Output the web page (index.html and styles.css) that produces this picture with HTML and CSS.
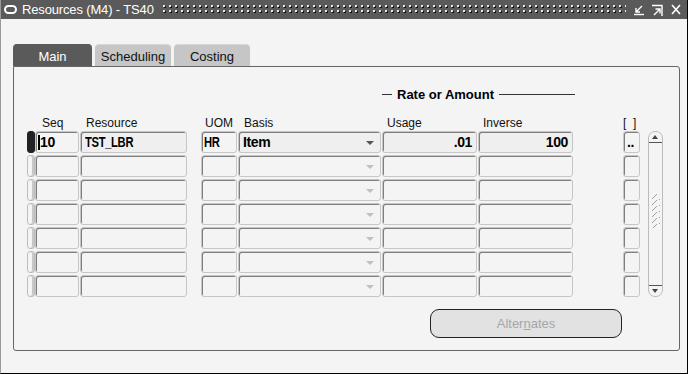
FILE: index.html
```html
<!DOCTYPE html>
<html lang="en">
<head>
  <meta charset="UTF-8" />
  <title>Resources (M4) - TS40</title>
  <link rel="stylesheet" href="styles.css">
</head>
<body>
  <div class="window">
    <div class="title-bar">
      <span class="app-icon"></span>
      <span class="title-text">Resources (M4) - TS40</span>
      <span class="grip"></span>
      <div class="win-buttons">
        <svg width="10" height="12" viewBox="0 0 10 12">
          <path d="M8 2L2 8M2 4v4h4" fill="none" stroke="#fff" stroke-width="1.4"/>
          <path d="M0 10.5h10" stroke="#fff" stroke-width="1.4"/>
        </svg>
        <svg width="11" height="12" viewBox="0 0 11 12">
          <path d="M0 1.5h10M10 1v11" stroke="#fff" stroke-width="1.4"/>
          <path d="M2 11L7.5 5.5M3.5 5h4.5v4.5" fill="none" stroke="#fff" stroke-width="1.4"/>
        </svg>
        <svg width="10" height="11" viewBox="0 0 10 11">
          <path d="M1 1l8 9M9 1l-8 9" stroke="#fff" stroke-width="1.6"/>
        </svg>
      </div>
    </div>

    <div class="content">
      <div class="tabs">
        <div class="tab active">Main</div>
        <div class="tab">Scheduling</div>
        <div class="tab">Costing</div>
      </div>

      <div class="panel">
        <div class="rate-head">
          <span class="rule short"></span>
          <span class="rate-text">Rate or Amount</span>
          <span class="rule"></span>
        </div>

        <div class="labels">
          <span class="c-ind"></span>
          <span class="c-seq">Seq</span>
          <span class="c-res">Resource</span>
          <span class="c-uom">UOM</span>
          <span class="c-basis">Basis</span>
          <span class="c-usage">Usage</span>
          <span class="c-inv">Inverse</span>
          <span class="c-more">[&nbsp;&nbsp;]</span>
        </div>

        <div class="table">
          <div class="rows">
            <div class="row current">
              <span class="ind c-ind"></span>
              <span class="field c-seq"><i class="cursor"></i><span class="val">10</span></span>
              <span class="field c-res shaded"><span class="val caps">TST_LBR</span></span>
              <span class="field c-uom"><span class="val caps">HR</span></span>
              <span class="field c-basis shaded">Item<b class="drop"></b></span>
              <span class="field c-usage shaded num">.01</span>
              <span class="field c-inv shaded num">100</span>
              <span class="field c-more">..</span>
            </div>
            <div class="row">
              <span class="ind c-ind"></span>
              <span class="field c-seq"></span>
              <span class="field c-res"></span>
              <span class="field c-uom"></span>
              <span class="field c-basis"><b class="drop"></b></span>
              <span class="field c-usage"></span>
              <span class="field c-inv"></span>
              <span class="field c-more"></span>
            </div>
            <div class="row">
              <span class="ind c-ind"></span>
              <span class="field c-seq"></span>
              <span class="field c-res"></span>
              <span class="field c-uom"></span>
              <span class="field c-basis"><b class="drop"></b></span>
              <span class="field c-usage"></span>
              <span class="field c-inv"></span>
              <span class="field c-more"></span>
            </div>
            <div class="row">
              <span class="ind c-ind"></span>
              <span class="field c-seq"></span>
              <span class="field c-res"></span>
              <span class="field c-uom"></span>
              <span class="field c-basis"><b class="drop"></b></span>
              <span class="field c-usage"></span>
              <span class="field c-inv"></span>
              <span class="field c-more"></span>
            </div>
            <div class="row">
              <span class="ind c-ind"></span>
              <span class="field c-seq"></span>
              <span class="field c-res"></span>
              <span class="field c-uom"></span>
              <span class="field c-basis"><b class="drop"></b></span>
              <span class="field c-usage"></span>
              <span class="field c-inv"></span>
              <span class="field c-more"></span>
            </div>
            <div class="row">
              <span class="ind c-ind"></span>
              <span class="field c-seq"></span>
              <span class="field c-res"></span>
              <span class="field c-uom"></span>
              <span class="field c-basis"><b class="drop"></b></span>
              <span class="field c-usage"></span>
              <span class="field c-inv"></span>
              <span class="field c-more"></span>
            </div>
            <div class="row">
              <span class="ind c-ind"></span>
              <span class="field c-seq"></span>
              <span class="field c-res"></span>
              <span class="field c-uom"></span>
              <span class="field c-basis"><b class="drop"></b></span>
              <span class="field c-usage"></span>
              <span class="field c-inv"></span>
              <span class="field c-more"></span>
            </div>
          </div>

          <div class="scrollbar">
            <span class="arrow up"></span>
            <span class="thumb-grip"></span>
            <span class="arrow down"></span>
          </div>
        </div>

        <div class="actions">
          <button class="btn" disabled>Alter<u>n</u>ates</button>
        </div>
      </div>
    </div>
  </div>
</body>
</html>
```

FILE: styles.css
```css
body {
  margin: 0;
  padding: 0;
  background: #f4f4f4;
  font-family: 'Liberation Sans', Arial, sans-serif;
  color: #000;
}

.window {
  width: 688px;
  height: 374px;
  box-sizing: border-box;
  background: #f4f4f4;
  border-left: 1px solid #9a9a9a;
  border-right: 1px solid #000;
  border-bottom: 1px solid #000;
  overflow: hidden;
}

.title-bar {
  height: 19px;
  background: #5a5a5a;
  display: flex;
  align-items: center;
  padding-left: 3px;
  color: #ffffff;
}

.app-icon {
  width: 9px;
  height: 5px;
  border: 2px solid #ffffff;
  border-radius: 5px;
  margin-right: 5px;
  flex: none;
}

.title-text {
  font-size: 13px;
  letter-spacing: -0.15px;
  white-space: nowrap;
  flex: none;
}

.grip {
  flex: 1;
  height: 10px;
  margin: 0 8px 0 9px;
  background-image:
    radial-gradient(circle at 1px 1px, #e8e8e8 0.8px, transparent 1px),
    radial-gradient(circle at 1px 1px, #111 0.8px, transparent 1px);
  background-size: 6px 5px, 6px 5px;
  background-position: 0 0, 1px 1px;
}

.win-buttons {
  display: flex;
  align-items: center;
  gap: 8px;
  padding-right: 6px;
}

.content {
  padding: 25px 0 0 12px;
}

.tabs {
  display: flex;
  gap: 3px;
  height: 22px;
}

.tab {
  width: 76px;
  background: #c6c6c6;
  border-radius: 4px 4px 0 0;
  font-size: 13px;
  text-align: center;
  line-height: 23px;
  color: #111;
  border-top: 1px solid #d8d8d8;
  box-sizing: border-box;
}

.tab.active {
  width: 79px;
  background: #5a5a5a;
  color: #ffffff;
  border-top-color: #5a5a5a;
}

.panel {
  width: 667px;
  height: 285px;
  box-sizing: border-box;
  border: 1px solid #666;
  border-radius: 0 3px 3px 3px;
  padding: 20px 0 0 13px;
}

.rate-head {
  display: flex;
  align-items: center;
  gap: 5px;
  margin-left: 355px;
  width: 193px;
  height: 15px;
}

.rule {
  flex: 1;
  height: 1px;
  background: #333;
}

.rule.short {
  flex: 0 0 10px;
}

.rate-text {
  font-size: 13px;
  font-weight: 700;
  white-space: nowrap;
}

.labels {
  display: flex;
  margin-top: 14px;
  height: 14px;
  font-size: 12px;
  line-height: 14px;
  color: #111;
}

.c-ind { width: 8px; }
.c-seq { width: 44px; }
.c-res { width: 107px; margin-left: 1px; }
.c-uom { width: 36px; margin-left: 14px; }
.c-basis { width: 143px; margin-left: 1px; }
.c-usage { width: 95px; margin-left: 1px; }
.c-inv { width: 95px; margin-left: 1px; }
.c-more { width: 17px; margin-left: 50px; }

.labels span { box-sizing: border-box; white-space: nowrap; }
.labels .c-seq { padding-left: 7px; }
.labels .c-res { padding-left: 6px; }
.labels .c-uom { padding-left: 4px; }
.labels .c-basis { padding-left: 6px; }
.labels .c-usage { padding-left: 5px; }
.labels .c-inv { padding-left: 5px; }

.table {
  display: flex;
  margin-top: 1px;
}

.rows {
  display: flex;
  flex-direction: column;
  gap: 2px;
}

.row {
  display: flex;
  height: 22px;
}

.row > span {
  box-sizing: border-box;
  height: 22px;
}

.ind {
  border: 1px solid #bdbdbd;
  border-radius: 3px;
  box-shadow: inset -2px 0 0 #c8c8c8;
  background: #f4f4f4;
}

.row.current .ind {
  background: #222;
  border-color: #222;
  box-shadow: none;
}

.field {
  position: relative;
  border: 1px solid #c6c6c6;
  border-radius: 3px;
  box-shadow: inset 1px 1px 0 #7e7e7e;
  background: #f4f4f4;
  font-size: 14px;
  font-weight: 700;
  line-height: 20px;
  padding-left: 4px;
  white-space: nowrap;
  letter-spacing: -0.4px;
}

.val {
  display: inline-block;
  transform-origin: left center;
}

.val.caps {
  transform: scaleX(0.8);
}

.field.shaded {
  background: #efefef;
}

.field.num {
  text-align: right;
  padding-right: 4px;
}

.c-uom.field { padding-left: 2px; }
.c-more.field { padding-left: 3px; }

.cursor {
  display: inline-block;
  width: 2px;
  height: 15px;
  background: #000;
  vertical-align: -3px;
  margin-right: 0;
  margin-left: -2px;
}

.drop {
  position: absolute;
  right: 6px;
  top: 9px;
  width: 0;
  height: 0;
  border-left: 4px solid transparent;
  border-right: 4px solid transparent;
  border-top: 4px solid #c0c0c0;
}

.row.current .drop {
  border-top-color: #555;
}

.scrollbar {
  margin-left: 8px;
  width: 15px;
  height: 166px;
  box-sizing: border-box;
  border: 1px solid #bcbcbc;
  border-radius: 7px;
  display: flex;
  flex-direction: column;
  align-items: center;
  justify-content: space-between;
}

.arrow {
  width: 13px;
  height: 11px;
  box-sizing: border-box;
  position: relative;
}

.arrow.up {
  border-bottom: 1px solid #555;
}

.arrow.down {
  border-top: 1px solid #555;
}

.arrow::after {
  content: '';
  position: absolute;
  left: 3px;
  border-left: 3.5px solid transparent;
  border-right: 3.5px solid transparent;
}

.arrow.up::after {
  top: 3px;
  border-bottom: 4px solid #444;
}

.arrow.down::after {
  top: 3px;
  border-top: 4px solid #444;
}

.thumb-grip {
  width: 8px;
  height: 34px;
  margin-top: -6px;
  background-image:
    repeating-linear-gradient(135deg, transparent 0 3px, #8a8a8a 3px 4px, transparent 4px 6px);
  background-size: 8px 6px;
  opacity: 0.8;
}

.actions {
  display: flex;
  margin-top: 12px;
  padding-left: 403px;
}

.btn {
  width: 192px;
  height: 29px;
  border: 1px solid #222;
  border-radius: 9px;
  background: #e2e2e2;
  color: #a6a6a6;
  font-family: 'Liberation Sans', Arial, sans-serif;
  font-size: 13px;
  padding: 0;
}
```
